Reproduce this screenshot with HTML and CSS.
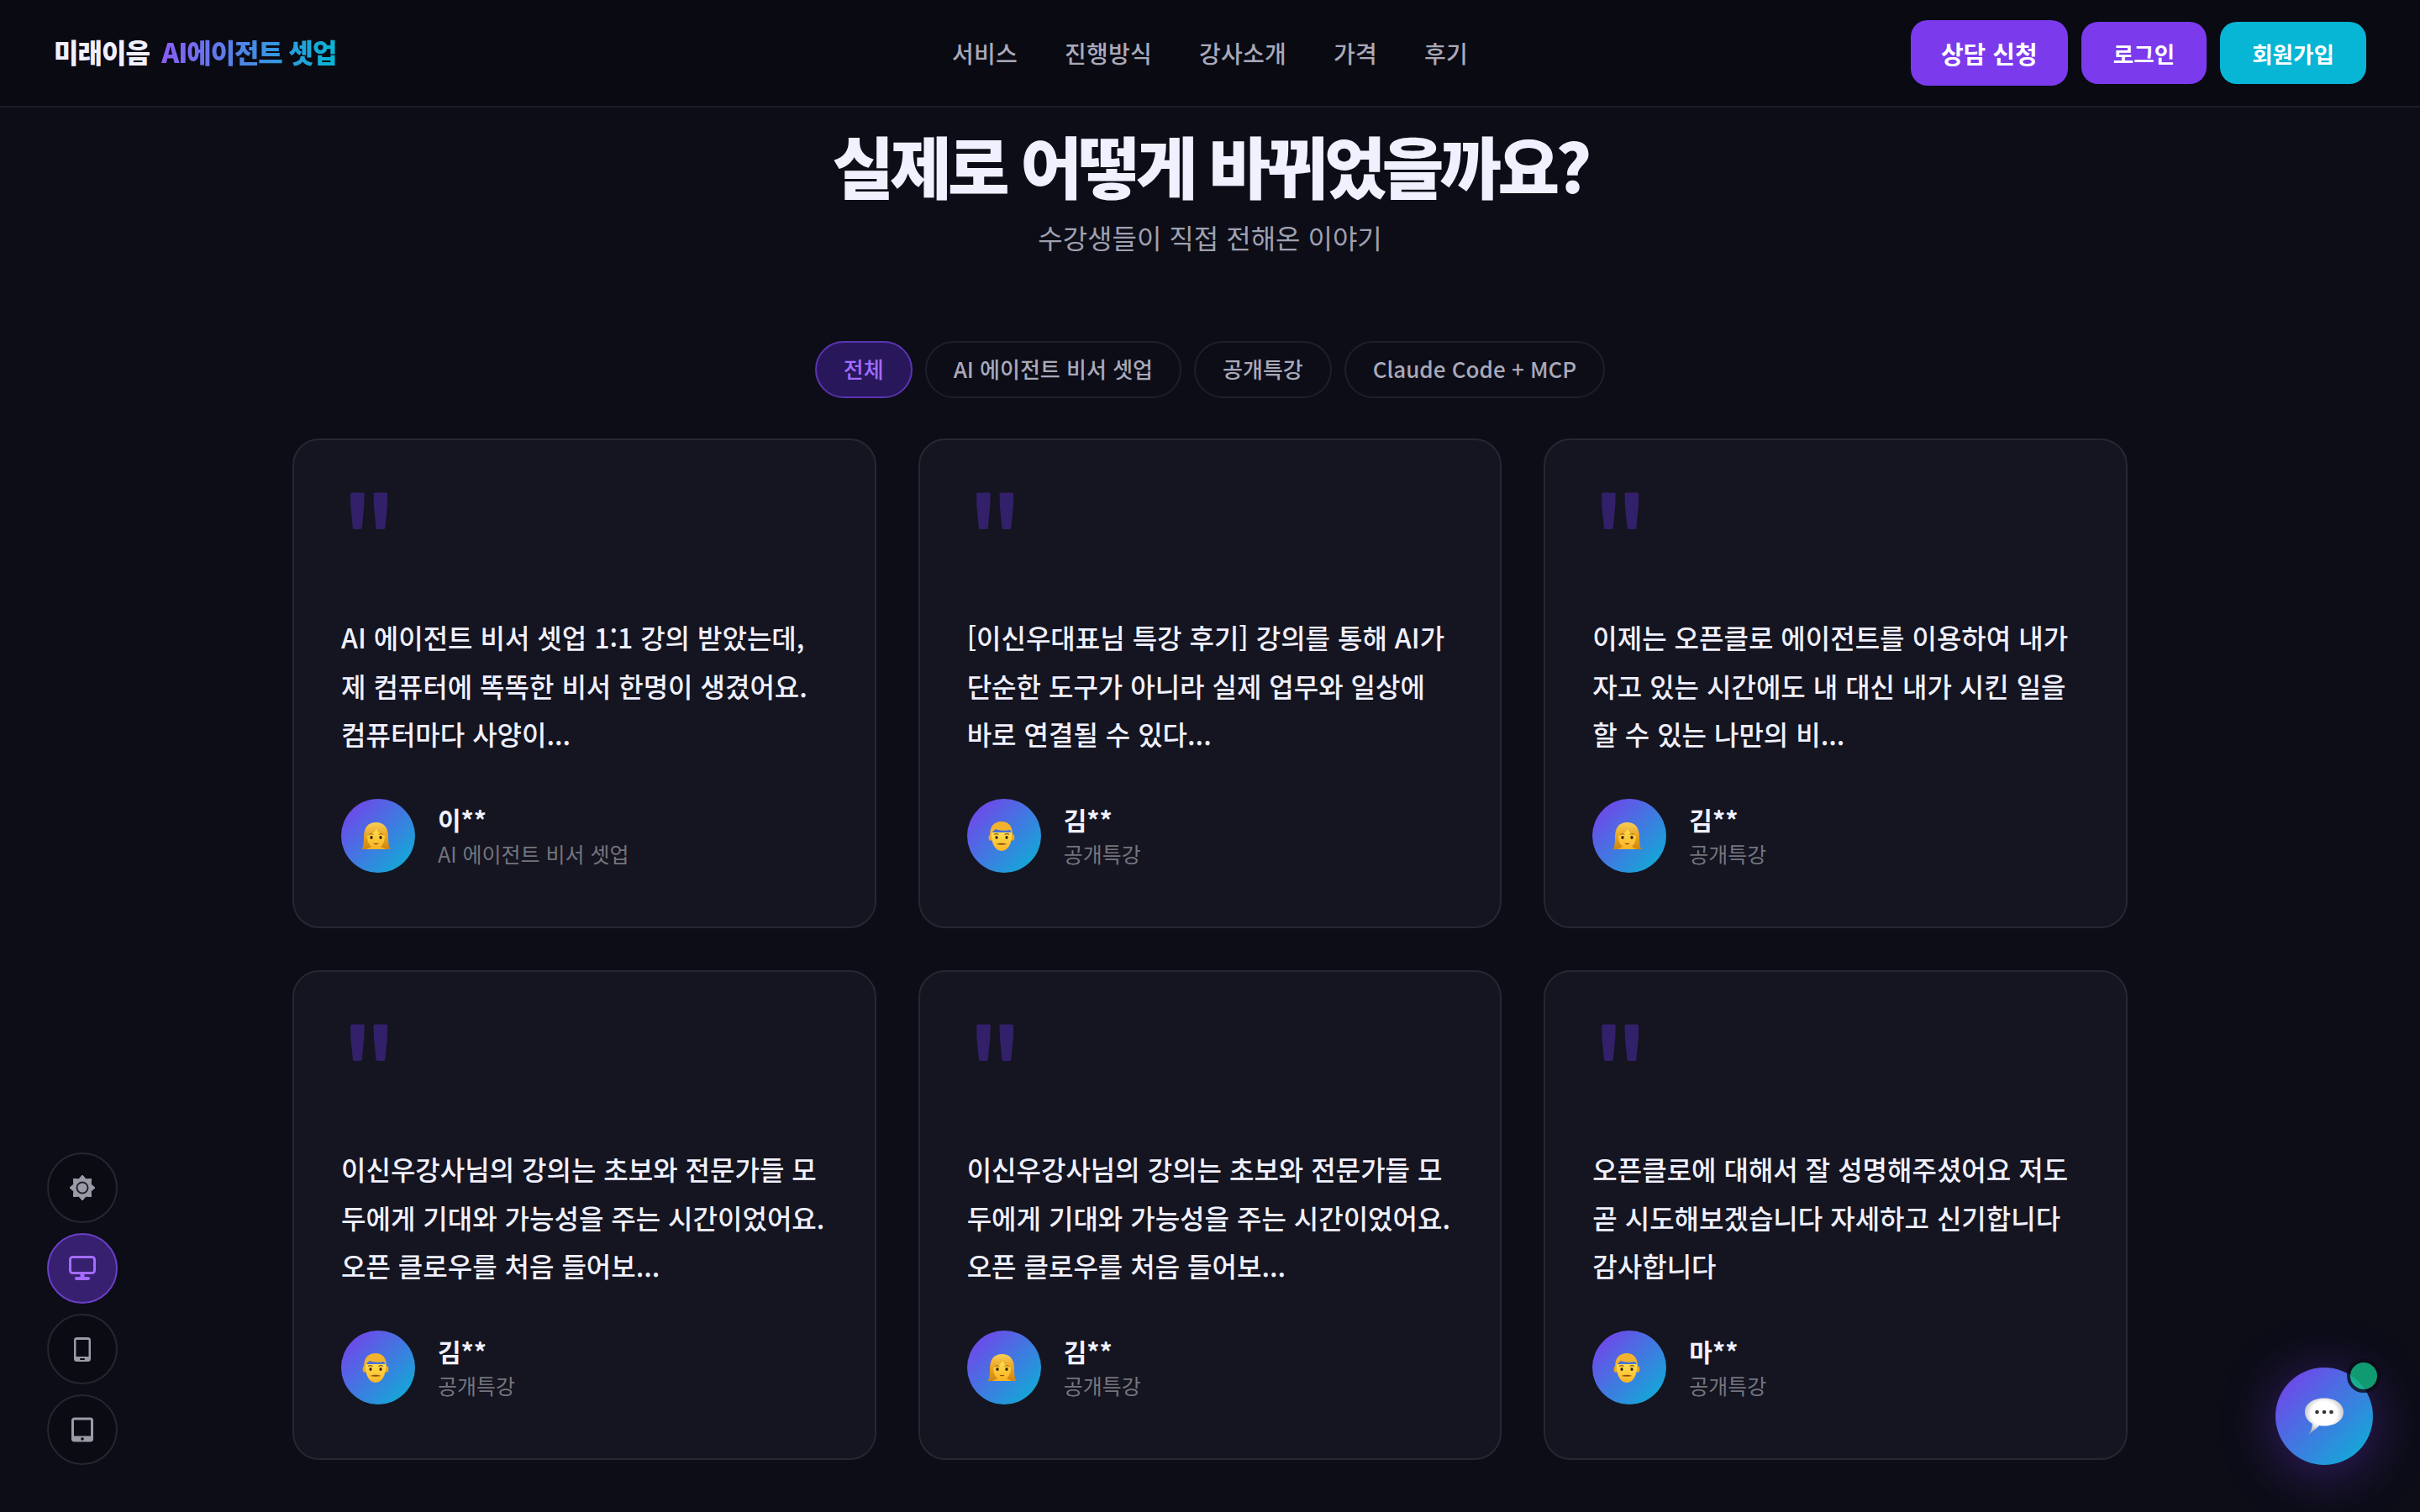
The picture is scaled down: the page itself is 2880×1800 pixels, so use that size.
FILE: index.html
```html
<!DOCTYPE html>
<html lang="ko">
<head>
  <meta charset="UTF-8" />
  <meta name="viewport" content="width=device-width, initial-scale=1.0"/>
  <title>미래이음 AI에이전트 셋업</title>
  <link rel="stylesheet" href="styles.css">
</head>
<body>

  <!-- Emoji drawings, used by every avatar -->
  <svg class="defs" width="0" height="0" aria-hidden="true">
    <defs>
      <linearGradient id="skin" x1="0" y1="0" x2="0" y2="1">
        <stop offset="0" stop-color="#ffe04f"/>
        <stop offset="1" stop-color="#f9b425"/>
      </linearGradient>
      <linearGradient id="blond" x1="0" y1="0" x2="0" y2="1">
        <stop offset="0" stop-color="#f7cf5a"/>
        <stop offset="0.5" stop-color="#e9a421"/>
        <stop offset="1" stop-color="#cf8410"/>
      </linearGradient>
      <radialGradient id="bubble" cx="0.5" cy="0.42" r="0.6">
        <stop offset="0.55" stop-color="#ffffff"/>
        <stop offset="1" stop-color="#a9a9b2"/>
      </radialGradient>
      <symbol id="woman" viewBox="0 0 40 40">
        <path d="M0 36c2-1 3-6 3-14C3 10 8 4 17.500 4S32 10 32 22c0 8 1 13 3 14z" fill="url(#blond)"/>
        <path d="M5 36c3-.5 6-2 7-4h11c1 2 4 3.500 7 4z" fill="#f6b52a"/>
        <path d="M7 20c4-.5 8-3 11-8 2 4 5 7 10 8 0 9-4 14-10.500 14S7 29 7 20z" fill="url(#skin)"/>
        <path d="M9.500 18.500c1.500-1 3.500-1 5 0M20.500 18.500c1.500-1 3.500-1 5 0" fill="none" stroke="#a5631a" stroke-width="1"/>
        <ellipse cx="12" cy="22" rx="1.700" ry="2.100" fill="#3d2410"/>
        <ellipse cx="23" cy="22" rx="1.700" ry="2.100" fill="#3d2410"/>
        <path d="M14.500 28.500c2 1 4 1 6 0-1 2.400-5 2.400-6 0z" fill="#7c3212"/>
      </symbol>
      <symbol id="man" viewBox="0 0 40 40">
        <ellipse cx="4" cy="22" rx="2.400" ry="3.800" fill="#eea61f"/>
        <ellipse cx="30" cy="22" rx="2.400" ry="3.800" fill="#eea61f"/>
        <path d="M4.500 16c0 13 5 22 12.500 22s12.500-9 12.500-22z" fill="url(#skin)"/>
        <path d="M3.500 21C2 9 8 3 17 3c8 0 13.500 5 13 18-.5-3-1.500-6-3-8-6 1-13 1-17-1-3 2-5.500 5-6.500 9z" fill="#f2b32f"/>
        <path d="M8 18.500c1.500-1 4-1 5.500 0M20.500 18.500c1.500-1 4-1 5.500 0" fill="none" stroke="#9a5a16" stroke-width="1.200"/>
        <ellipse cx="11" cy="22" rx="1.600" ry="1.900" fill="#3d2410"/>
        <ellipse cx="23" cy="22" rx="1.600" ry="1.900" fill="#3d2410"/>
        <path d="M10.500 30c4.500-1.600 8.500-1.600 13 0-4 1-9 1-13 0z" fill="#8a4d12"/>
      </symbol>
    </defs>
  </svg>

  <header class="topbar">
    <a class="logo">미래이음 <span class="logo-accent">AI에이전트 셋업</span></a>
    <nav class="menu">
      <a>서비스</a>
      <a>진행방식</a>
      <a>강사소개</a>
      <a>가격</a>
      <a>후기</a>
    </nav>
    <div class="actions">
      <button class="btn btn-main">상담 신청</button>
      <button class="btn btn-login">로그인</button>
      <button class="btn btn-join">회원가입</button>
    </div>
  </header>

  <main class="reviews">
    <h1>실제로 어떻게 바뀌었을까요?</h1>
    <p class="subtitle">수강생들이 직접 전해온 이야기</p>

    <div class="filters">
      <button class="pill active">전체</button>
      <button class="pill">AI 에이전트 비서 셋업</button>
      <button class="pill">공개특강</button>
      <button class="pill">Claude Code + MCP</button>
    </div>

    <div class="cards">
      <article class="card">
        <svg class="quote"><text x="0" y="129">"</text></svg>
        <p class="text">AI 에이전트 비서 셋업 1:1 강의 받았는데, 제 컴퓨터에 똑똑한 비서 한명이 생겼어요. 컴퓨터마다 사양이...</p>
        <div class="author">
          <div class="avatar"><svg><use href="#woman"/></svg></div>
          <div>
            <div class="name">이**</div>
            <div class="course">AI 에이전트 비서 셋업</div>
          </div>
        </div>
      </article>

      <article class="card">
        <svg class="quote"><text x="0" y="129">"</text></svg>
        <p class="text">[이신우대표님 특강 후기] 강의를 통해 AI가 단순한 도구가 아니라 실제 업무와 일상에 바로 연결될 수 있다...</p>
        <div class="author">
          <div class="avatar"><svg><use href="#man"/></svg></div>
          <div>
            <div class="name">김**</div>
            <div class="course">공개특강</div>
          </div>
        </div>
      </article>

      <article class="card">
        <svg class="quote"><text x="0" y="129">"</text></svg>
        <p class="text">이제는 오픈클로 에이전트를 이용하여 내가 자고 있는 시간에도 내 대신 내가 시킨 일을 할 수 있는 나만의 비...</p>
        <div class="author">
          <div class="avatar"><svg><use href="#woman"/></svg></div>
          <div>
            <div class="name">김**</div>
            <div class="course">공개특강</div>
          </div>
        </div>
      </article>

      <article class="card">
        <svg class="quote"><text x="0" y="129">"</text></svg>
        <p class="text">이신우강사님의 강의는 초보와 전문가들 모두에게 기대와 가능성을 주는 시간이었어요. 오픈 클로우를 처음 들어보...</p>
        <div class="author">
          <div class="avatar"><svg><use href="#man"/></svg></div>
          <div>
            <div class="name">김**</div>
            <div class="course">공개특강</div>
          </div>
        </div>
      </article>

      <article class="card">
        <svg class="quote"><text x="0" y="129">"</text></svg>
        <p class="text">이신우강사님의 강의는 초보와 전문가들 모두에게 기대와 가능성을 주는 시간이었어요. 오픈 클로우를 처음 들어보...</p>
        <div class="author">
          <div class="avatar"><svg><use href="#woman"/></svg></div>
          <div>
            <div class="name">김**</div>
            <div class="course">공개특강</div>
          </div>
        </div>
      </article>

      <article class="card">
        <svg class="quote"><text x="0" y="129">"</text></svg>
        <p class="text">오픈클로에 대해서 잘 성명해주셨어요 저도 곧 시도해보겠습니다 자세하고 신기합니다 감사합니다</p>
        <div class="author">
          <div class="avatar"><svg><use href="#man"/></svg></div>
          <div>
            <div class="name">마**</div>
            <div class="course">공개특강</div>
          </div>
        </div>
      </article>
    </div>
  </main>

  <!-- Floating preview switcher -->
  <div class="switcher">
    <button class="round">
      <svg viewBox="0 0 36 36" width="36" height="36">
        <polygon points="18,3 22.200,7.800 28.600,7.400 28.200,13.800 33,18 28.200,22.200 28.600,28.600 22.200,28.200 18,33 13.800,28.200 7.400,28.600 7.800,22.200 3,18 7.800,13.800 7.400,7.400 13.800,7.800" fill="#9b9ba8" stroke="#9b9ba8" stroke-linejoin="round"/>
        <circle cx="18" cy="18" r="6.500" fill="#9b9ba8" stroke="#23232e" stroke-width="2"/>
      </svg>
    </button>
    <button class="round current">
      <svg viewBox="0 0 36 36" width="36" height="36">
        <rect x="3.500" y="4.500" width="29" height="19" rx="3" fill="none" stroke="#a36bff" stroke-width="3"/>
        <rect x="15.500" y="25" width="5" height="4" fill="#a36bff"/>
        <rect x="9" y="28" width="18" height="4" rx="2" fill="#a36bff"/>
      </svg>
    </button>
    <button class="round">
      <svg viewBox="0 0 36 36" width="36" height="36">
        <rect x="8" y="4" width="20" height="29" rx="3.500" fill="#9b9ba8"/>
        <rect x="10.500" y="7" width="15" height="20" fill="#0b0b14"/>
        <rect x="15" y="29" width="6" height="2" rx="1" fill="#0b0b14"/>
      </svg>
    </button>
    <button class="round">
      <svg viewBox="0 0 36 36" width="36" height="36">
        <rect x="5" y="3.500" width="26" height="29" rx="3.500" fill="#9b9ba8"/>
        <rect x="8" y="6.500" width="20" height="19" fill="#0b0b14"/>
        <circle cx="18" cy="29" r="1.800" fill="#0b0b14"/>
      </svg>
    </button>
  </div>

  <!-- Chat launcher -->
  <button class="chat">
    <svg viewBox="0 0 48 48" width="48" height="48">
      <path d="M24 2.500c13 0 23 6.500 23 16.500S37 35.500 24 35.500c-2 0-4-.2-6-.6C15 38.500 11 41 5 46c2.500-3 4.500-7 5-13C5 30 1 25 1 19 1 9 11 2.500 24 2.500z" fill="url(#bubble)"/>
      <circle cx="15.500" cy="19" r="2.300" fill="#33333a"/>
      <circle cx="24" cy="19" r="2.300" fill="#33333a"/>
      <circle cx="32.500" cy="19" r="2.300" fill="#33333a"/>
    </svg>
    <span class="badge"></span>
  </button>

</body>
</html>
```

FILE: styles.css
```css
* {
  box-sizing: border-box;
}
html, body {
  height: 100%;
}
body {
  margin: 0;
  overflow: hidden;
  background: #0c0d17;
  color: #f0f0ff;
  font-family: "Noto Sans CJK KR", "Noto Sans", sans-serif;
}
button {
  font-family: inherit;
  cursor: pointer;
}
.defs {
  position: absolute;
}

/* Top bar */
.topbar {
  display: grid;
  grid-template-columns: 1fr auto 1fr;
  align-items: center;
  height: 128px;
  padding: 0 64px;
  background: #0a0a13;
  border-bottom: 2px solid #1d1d27;
}
.logo {
  font-size: 32px;
  font-weight: 900;
  letter-spacing: -0.9px;
  color: #f0f0ff;
  white-space: nowrap;
  margin-top: -5px;
}
.logo-accent {
  margin-left: 6px;
  letter-spacing: -1.1px;
  background: linear-gradient(90deg, #8b5cf6, #06b6d4);
  -webkit-background-clip: text;
  background-clip: text;
  color: transparent;
}
.menu {
  display: flex;
  gap: 56px;
}
.menu a {
  font-size: 28px;
  font-weight: 500;
  letter-spacing: 0.25px;
  color: #a9a9b9;
}
.actions {
  display: flex;
  justify-content: flex-end;
  align-items: center;
  gap: 16px;
}
.btn {
  height: 74px;
  padding: 0 38px;
  border: none;
  border-radius: 20px;
  color: #fff;
  font-size: 26.6px;
  font-weight: 700;
}
.btn-main {
  height: 78px;
  padding: 0 36px;
  font-size: 29px;
  background: #7c3aed;
}
.btn-login {
  background: #7c3aed;
}
.btn-join {
  background: #06b6d4;
}

/* Reviews */
.reviews {
  width: 2184px;
  margin: 0 auto;
  text-align: center;
}
h1 {
  margin: 12px 0 0;
  font-size: 80px;
  line-height: 110px;
  font-weight: 900;
  letter-spacing: -4.8px;
  color: #f0f0ff;
}
.subtitle {
  margin: 8px 0 0;
  font-size: 32px;
  line-height: 48px;
  color: #a0a0b0;
}
.filters {
  display: flex;
  justify-content: center;
  gap: 15px;
  margin-top: 100px;
}
.pill {
  height: 68px;
  padding: 0 32px 3px;
  border: 2px solid #1f1f2b;
  border-radius: 34px;
  background: transparent;
  color: #a9a9b9;
  font-size: 26px;
  font-weight: 500;
}
.pill.active {
  background: #28175a;
  border-color: #5b34b0;
  color: #a36bff;
}
.cards {
  display: grid;
  grid-template-columns: repeat(3, 1fr);
  gap: 50px;
  margin-top: 48px;
  text-align: left;
}
.card {
  height: 583px;
  padding: 58px 56px 0;
  background: #141520;
  border: 2px solid #262733;
  border-radius: 32px;
}
.quote {
  display: block;
  width: 100px;
  height: 148px;
  overflow: visible;
  font-size: 140px;
  fill: #33206a;
  stroke: #33206a;
  stroke-width: 3px;
  stroke-linejoin: round;
}
.text {
  height: 173px;
  margin: 0;
  font-size: 32px;
  line-height: 57.6px;
  font-weight: 500;
  color: #f0f0ff;
}
.author {
  display: flex;
  align-items: center;
  gap: 27px;
  margin-top: 48px;
}
.avatar {
  display: flex;
  justify-content: center;
  align-items: center;
  width: 88px;
  height: 88px;
  flex-shrink: 0;
  border-radius: 50%;
  background: linear-gradient(135deg, #7c3aed, #06b6d4);
}
.avatar svg {
  width: 40px;
  height: 40px;
}
.name {
  font-size: 30px;
  line-height: 42px;
  font-weight: 700;
  color: #f0f0ff;
}
.course {
  font-size: 25px;
  line-height: 40px;
  color: #74747f;
}

/* Floating controls */
.switcher {
  position: fixed;
  left: 56px;
  bottom: 56px;
  display: flex;
  flex-direction: column;
  gap: 12px;
}
.round {
  display: flex;
  justify-content: center;
  align-items: center;
  width: 84px;
  height: 84px;
  padding: 0;
  border: 2px solid #262631;
  border-radius: 50%;
  background: #0b0b14;
}
.round.current {
  background: #37206f;
  border-color: #6a3fc4;
}
.chat {
  position: fixed;
  right: 56px;
  bottom: 56px;
  display: flex;
  justify-content: center;
  align-items: center;
  width: 116px;
  height: 116px;
  padding: 0;
  border: none;
  border-radius: 50%;
  background: linear-gradient(135deg, #7c3aed, #06b6d4);
  box-shadow: 0 8px 64px rgba(124, 58, 237, 0.4);
}
.badge {
  position: absolute;
  top: -10px;
  right: -9px;
  width: 40px;
  height: 40px;
  border: 4px solid #0b0b16;
  border-radius: 50%;
  background: #10b981;
  opacity: 0.82;
}
```
